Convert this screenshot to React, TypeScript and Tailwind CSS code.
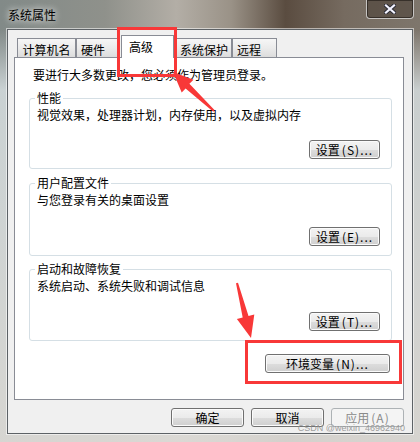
const tabs = [
  { label: "计算机名", w: "w-[59px]", pad: "justify-center" },
  { label: "硬件", w: "w-[43px]", pad: "pl-[4px]" },
  { label: "高级", w: "w-[53px]", active: true },
  { label: "系统保护", w: "w-[56px]", pad: "justify-center" },
  { label: "远程", w: "w-[45px]", pad: "pl-[4px]" },
];

const groups = [
  { title: "性能", text: "视觉效果，处理器计划，内存使用，以及虚拟内存", key: "S", h: "h-[54px]", mt: "mt-[8px]" },
  { title: "用户配置文件", text: "与您登录有关的桌面设置", key: "E", h: "h-[56px]", mt: "mt-[7px]" },
  { title: "启动和故障恢复", text: "系统启动、系统失败和调试信息", key: "T", h: "h-[55px]", mt: "mt-[6px]" },
];

function Btn({
  children,
  className = "",
  disabled = false,
}: {
  children: React.ReactNode;
  className?: string;
  disabled?: boolean;
}) {
  return (
    <button
      className={`flex h-[19px] items-center justify-center rounded-[3px] border text-[12px] leading-[16px] ${
        disabled
          ? "border-[#adb2b5] bg-[#f4f4f4] text-[#8a8a8a]"
          : "border-[#707070] bg-[linear-gradient(180deg,#f3f3f3_0%,#ebebeb_50%,#dddddd_51%,#cfcfcf_100%)] text-black shadow-[inset_0_0_0_1px_#fbfbfb]"
      } ${className}`}
    >
      {children}
    </button>
  );
}

// latin part of a button label, spaced out like the bitmap font
function Key({ children }: { children: React.ReactNode }) {
  return <span className="ml-[2px] tracking-[1px]">{children}</span>;
}

export default function App() {
  return (
    <div className="relative flex h-[442px] w-[420px] flex-col overflow-hidden bg-[linear-gradient(180deg,rgba(220,226,228,0)_0px,rgba(220,226,228,0)_30px,rgba(214,222,224,0.85)_90px,rgba(222,220,216,0.92)_100%),linear-gradient(90deg,#828a88_0%,#8f918b_25%,#b3aea6_42%,#9a9287_55%,#5a4c40_68%,#766b60_82%,#7e766c_100%)] font-['Noto_Sans_CJK_SC',sans-serif] text-[12px] text-black">
      {/* title bar */}
      <div className="flex h-[29px] shrink-0 items-start justify-between">
        <div className="pl-[8px] pt-[7px] leading-[16px] [text-shadow:0_0_6px_rgba(255,255,255,0.8),0_0_10px_rgba(255,255,255,0.6)]">
          系统属性
        </div>
        <div className="mr-[6px] flex h-[19px] w-[48px] items-center justify-center rounded-b-[4px] border border-t-0 border-[rgba(235,235,235,0.75)] bg-[rgba(60,48,40,0.45)] shadow-[inset_0_0_0_1px_rgba(30,25,20,0.6)]">
          <svg width="12" height="10" viewBox="0 0 12 10">
            <path d="M2 1.5 L10 8.5 M10 1.5 L2 8.5" stroke="#2a2a35" strokeWidth="4" strokeLinecap="square" />
            <path d="M2 1.5 L10 8.5 M10 1.5 L2 8.5" stroke="#f4f4ff" strokeWidth="2.2" strokeLinecap="square" />
          </svg>
        </div>
      </div>

      {/* client */}
      <div className="mx-[7px] h-[405px] shrink-0 border border-[#5d6266] bg-[#f0f0f0] shadow-[0_0_0_1px_rgba(255,255,255,0.55)]">
        <div className="ml-[6px] mr-[8px] pt-[5px]">
          <div className="flex items-end pl-[3px]">
            {tabs.map((t) =>
              t.active ? (
                <div
                  key={t.label}
                  className={`relative z-10 -mb-px mx-[2px] flex h-[23px] items-start border border-b-0 border-[#898c95] bg-white pl-[7px] pt-[3px] leading-[16px] ${t.w}`}
                >
                  {t.label}
                </div>
              ) : (
                <div
                  key={t.label}
                  className={`flex h-[19px] items-start border border-b-0 border-[#898c95] bg-[linear-gradient(180deg,#f6f6f6_0%,#ebebeb_50%,#dcdcdc_100%)] pt-[3px] leading-[16px] ${t.w} ${t.pad}`}
                >
                  {t.label}
                </div>
              )
            )}
          </div>

          <div className="flex h-[343px] flex-col border border-[#898c95] bg-white">
            <p className="pl-[18px] pt-[9px] leading-[16px]">要进行大多数更改，您必须作为管理员登录。</p>

            {groups.map((g) => (
              <fieldset
                key={g.title}
                className={`ml-[14px] mr-[11px] rounded-[3px] border border-[#d5dfe5] px-[5px] pb-[9px] ${g.mt}`}
              >
                <legend className="px-[2px] leading-[14px]">{g.title}</legend>
                <div className={`flex flex-col pl-[2px] pr-[6px] ${g.h}`}>
                  <p className="mt-[2px] leading-[16px]">{g.text}</p>
                  <Btn className="mt-auto w-[71px] self-end">
                    设置<Key>({g.key})...</Key>
                  </Btn>
                </div>
              </fieldset>
            ))}

            <Btn className="mr-[13px] mt-[13px] w-[125px] self-end">
              环境变量<Key>(N)...</Key>
            </Btn>
          </div>

          <div className="mt-[8px] flex justify-end gap-[7px]">
            <Btn className="w-[73px]">确定</Btn>
            <Btn className="w-[73px]">取消</Btn>
            <Btn className="w-[73px]" disabled>
              应用<Key>(A)</Key>
            </Btn>
          </div>
        </div>
      </div>

      {/* annotations */}
      <svg className="pointer-events-none absolute inset-0" width="420" height="442" viewBox="0 0 420 442">
        <rect x="118.5" y="28.5" width="57" height="47" fill="none" stroke="#f83838" strokeWidth="3" />
        <rect x="246.5" y="341.5" width="154" height="41" fill="none" stroke="#f83838" strokeWidth="3" />
        <polygon
          fill="#f83838"
          points="173,72 193.5,79.7 189.4,83.8 214.7,110.3 213.3,111.7 185.6,88.6 181.7,92.5"
        />
        <polygon
          fill="#f83838"
          points="251,338 236.9,318.9 242.7,317.4 236,283.2 238,282.8 248.5,316 254.3,314.5"
        />
      </svg>

      <div className="pointer-events-none absolute bottom-[9px] right-[15px] font-['Liberation_Sans',sans-serif] text-[9px] leading-[10px] text-[rgba(140,140,140,0.85)]">
        CSDN @weixin_46962940
      </div>
    </div>
  );
}
